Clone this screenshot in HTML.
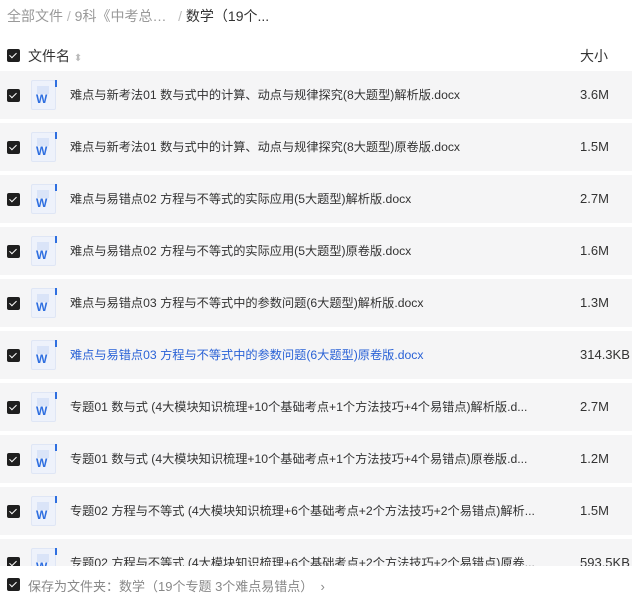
<!DOCTYPE html>
<html><head><meta charset="utf-8"><style>
*{margin:0;padding:0;box-sizing:border-box}
body{width:632px;height:598px;overflow:hidden;background:#fff;font-family:"Liberation Sans","Noto Sans CJK SC",sans-serif;color:#333;position:relative}
.bc{position:absolute;top:6px;left:7px;font-size:14px;color:#999;white-space:nowrap}
.bc b{font-weight:normal;color:#333}
.cb{position:absolute;width:13px;height:13px;background:#1f1f1f;border-radius:2px}
.cb:after{content:"";position:absolute;left:4px;top:2px;width:3px;height:6px;border:solid #fff;border-width:0 1.5px 1.5px 0;transform:rotate(45deg)}
.hdr{position:absolute;top:45px;left:0;width:632px;font-size:14px}
.row{position:absolute;left:0;width:632px;height:48px;background:#f5f5f6;font-size:12.2px;line-height:48px}
.row .cb{left:7px;top:18px}
.ic{position:absolute;left:31px;top:9px;width:25px;height:30px;background:#eef2fb;border:1px solid #dfe6f5;border-radius:2px}
.ic:before{content:"";position:absolute;right:-2px;top:-1px;width:2px;height:7px;background:#2f6fe0}
.ic i{position:absolute;left:5px;top:5px;width:12px;height:8px;background:#dae4f8}
.ic span{position:absolute;left:4px;bottom:3px;font-weight:bold;font-size:12px;line-height:14px;color:#2f6fe0;font-style:normal}
.nm{position:absolute;left:70px;top:0;white-space:nowrap}
.sz{position:absolute;left:580px;top:0;white-space:nowrap;font-size:13px}
.ft{position:absolute;left:0;top:566px;width:632px;height:32px;background:#fff;font-size:13px;color:#888}
</style></head><body>
<div class="bc">全部文件 <span style="color:#bbb">/</span> 9科《中考总…&nbsp;&nbsp; <span style="color:#bbb">/</span> <b>数学（19个...</b></div>
<div class="hdr"><div class="cb" style="left:7px;top:4px"></div><span style="position:absolute;left:28px;top:1px">文件名 <span style="color:#bbb;font-size:10px">⬍</span></span><span style="position:absolute;left:580px;top:1px">大小</span></div>

<div class="row" style="top:71px"><div class="cb"></div><div class="ic"><i></i><span>W</span></div><div class="nm">难点与新考法01 数与式中的计算、动点与规律探究(8大题型)解析版.docx</div><div class="sz">3.6M</div></div>
<div class="row" style="top:123px"><div class="cb"></div><div class="ic"><i></i><span>W</span></div><div class="nm">难点与新考法01 数与式中的计算、动点与规律探究(8大题型)原卷版.docx</div><div class="sz">1.5M</div></div>
<div class="row" style="top:175px"><div class="cb"></div><div class="ic"><i></i><span>W</span></div><div class="nm">难点与易错点02 方程与不等式的实际应用(5大题型)解析版.docx</div><div class="sz">2.7M</div></div>
<div class="row" style="top:227px"><div class="cb"></div><div class="ic"><i></i><span>W</span></div><div class="nm">难点与易错点02 方程与不等式的实际应用(5大题型)原卷版.docx</div><div class="sz">1.6M</div></div>
<div class="row" style="top:279px"><div class="cb"></div><div class="ic"><i></i><span>W</span></div><div class="nm">难点与易错点03 方程与不等式中的参数问题(6大题型)解析版.docx</div><div class="sz">1.3M</div></div>
<div class="row" style="top:331px"><div class="cb"></div><div class="ic"><i></i><span>W</span></div><div class="nm" style="color:#2a62d6">难点与易错点03 方程与不等式中的参数问题(6大题型)原卷版.docx</div><div class="sz">314.3KB</div></div>
<div class="row" style="top:383px"><div class="cb"></div><div class="ic"><i></i><span>W</span></div><div class="nm">专题01 数与式 (4大模块知识梳理+10个基础考点+1个方法技巧+4个易错点)解析版.d...</div><div class="sz">2.7M</div></div>
<div class="row" style="top:435px"><div class="cb"></div><div class="ic"><i></i><span>W</span></div><div class="nm">专题01 数与式 (4大模块知识梳理+10个基础考点+1个方法技巧+4个易错点)原卷版.d...</div><div class="sz">1.2M</div></div>
<div class="row" style="top:487px"><div class="cb"></div><div class="ic"><i></i><span>W</span></div><div class="nm">专题02 方程与不等式 (4大模块知识梳理+6个基础考点+2个方法技巧+2个易错点)解析...</div><div class="sz">1.5M</div></div>
<div class="row" style="top:539px"><div class="cb"></div><div class="ic"><i></i><span>W</span></div><div class="nm">专题02 方程与不等式 (4大模块知识梳理+6个基础考点+2个方法技巧+2个易错点)原卷...</div><div class="sz">593.5KB</div></div>

<div class="ft"><div class="cb" style="left:7px;top:12px"></div><span style="position:absolute;left:28px;top:10px">保存为文件夹：数学（19个专题 3个难点易错点） &nbsp;›</span></div>
</body></html>
